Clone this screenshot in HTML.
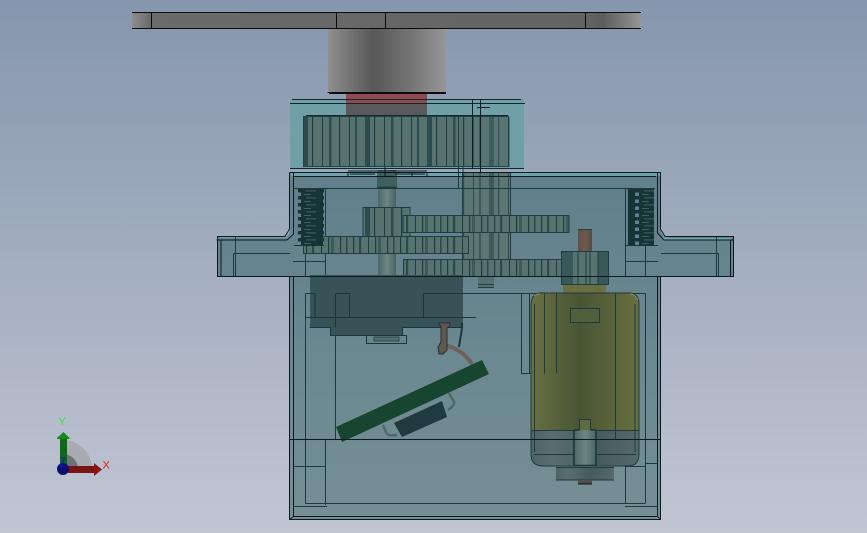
<!DOCTYPE html>
<html><head><meta charset="utf-8"><style>
html,body{margin:0;padding:0;width:867px;height:533px;overflow:hidden;background:#a5afc0}
svg{display:block}
text{font-family:"Liberation Sans",sans-serif}
</style></head><body>
<svg width="867" height="533" viewBox="0 0 867 533" xmlns="http://www.w3.org/2000/svg">
<defs>
<linearGradient id="bg" x1="0" y1="0" x2="0" y2="1"><stop offset="0" stop-color="#8596ad"/><stop offset="1" stop-color="#c2c6d3"/></linearGradient>
<linearGradient id="bar" x1="0" y1="0" x2="1" y2="0"><stop offset="0" stop-color="#8e8e8e"/><stop offset=".035" stop-color="#6b6b6b"/><stop offset=".9" stop-color="#636363"/><stop offset=".925" stop-color="#5c5c5c"/><stop offset="1" stop-color="#969696"/></linearGradient>
<linearGradient id="cyl" x1="0" y1="0" x2="1" y2="0"><stop offset="0" stop-color="#8f8f8f"/><stop offset=".38" stop-color="#585858"/><stop offset=".7" stop-color="#747474"/><stop offset="1" stop-color="#969696"/></linearGradient>
<linearGradient id="house" x1="0" y1="0" x2="0" y2="1"><stop offset="0" stop-color="#617f8b"/><stop offset="1" stop-color="#758f95"/></linearGradient>
<linearGradient id="motor" x1="0" y1="0" x2="1" y2="0"><stop offset="0" stop-color="#6a7044"/><stop offset=".45" stop-color="#485534"/><stop offset="1" stop-color="#68703f"/></linearGradient>
<linearGradient id="mlow" x1="0" y1="0" x2="1" y2="0"><stop offset="0" stop-color="#4d6366"/><stop offset=".2" stop-color="#5a6e70"/><stop offset=".6" stop-color="#445a5c"/><stop offset="1" stop-color="#56696b"/></linearGradient>
<linearGradient id="shaft" x1="0" y1="0" x2="1" y2="0"><stop offset="0" stop-color="#4b6868"/><stop offset=".5" stop-color="#6d8583"/><stop offset="1" stop-color="#47635f"/></linearGradient>
<linearGradient id="brown" x1="0" y1="0" x2="1" y2="0"><stop offset="0" stop-color="#5e5047"/><stop offset=".5" stop-color="#71584f"/><stop offset="1" stop-color="#4e4f49"/></linearGradient>
<pattern id="g1" width="62" height="60" patternUnits="userSpaceOnUse" x="303" y="116">
<rect width="62" height="60" fill="#587270"/>
<rect x="0" width="5" height="60" fill="#2c4c4d"/><rect x="9" width="1.2" height="60" fill="#1d3d40"/><rect x="19" width="1" height="60" fill="#1d3d40"/><rect x="26" width="2.500" height="60" fill="#2c4c4d"/><rect x="36" width="1.200" height="60" fill="#1d3d40"/><rect x="46" width="1" height="60" fill="#1d3d40"/><rect x="52" width="2" height="60" fill="#2c4c4d"/>
</pattern>
<pattern id="g2" width="47" height="40" patternUnits="userSpaceOnUse" x="303" y="236">
<rect width="47" height="40" fill="#587270"/>
<rect x="3" width="1.2" height="40" fill="#1d3d40"/><rect x="9" width="2.200" height="40" fill="#2a4a4b"/><rect x="18" width="1" height="40" fill="#1d3d40"/><rect x="25" width="1.200" height="40" fill="#1d3d40"/><rect x="28" width="3" height="40" fill="#3c5a5a"/><rect x="37" width="1.200" height="40" fill="#1d3d40"/><rect x="43" width="1.500" height="40" fill="#2a4a4b"/>
</pattern>
<pattern id="spr" width="26" height="7" patternUnits="userSpaceOnUse" x="298" y="189">
<rect x="0" y="0" width="26" height="3.500" fill="#173336"/><rect x="3" y="3.500" width="22" height="3.500" fill="#173336"/><rect x="8" y="1.500" width="10" height=".8" fill="#4d6b70"/><rect x="6" y="5" width="7" height=".8" fill="#4d6b70"/>
</pattern>
</defs>

<rect width="867" height="533" fill="url(#bg)"/>

<!-- top bar -->
<rect x="132" y="12.500" width="509" height="16" fill="url(#bar)"/>
<path d="M132 12.500H641M132 28.500H641M151.500 12.500V28.500M336.500 12.500V28.500M385.500 12.500V28.500M585.500 12.500V28.500" stroke="#0b0b0d" stroke-width="1" fill="none"/>

<!-- cylinder -->
<rect x="328" y="29" width="118" height="63" fill="url(#cyl)"/>
<path d="M327.500 92.500H446M329 93.500H446" stroke="#0c0c0c" stroke-width="1"/>

<!-- upper teal housing -->
<rect x="290" y="99" width="234" height="70" rx="2" fill="#6fa0a8"/>
<rect x="346" y="94" width="81" height="9" fill="#8e4a4e"/>
<rect x="346" y="103" width="81" height="13" fill="#5a5a5c"/>
<rect x="303" y="117" width="165" height="50" fill="url(#g1)"/>
<rect x="468" y="117" width="42" height="50" fill="url(#g1)"/>
<rect x="468" y="117" width="42" height="50" fill="#5c7a78" opacity=".35"/>
<rect x="303.500" y="116.500" width="205" height="50" fill="none" stroke="#214245" stroke-width="1"/>
<path d="M306 115.500H508M292 99.500H521M290 103.500H525M290 168.500H524" stroke="#12282d" stroke-width="1" fill="none"/>
<path d="M472.500 99.500V169M480.500 99.500V172M477 107.500H490" stroke="#0d1c20" stroke-width="1" fill="none"/>
<path d="M458.500 116V172M463 166V172" stroke="#1e3e42" stroke-width="1" fill="none"/>

<!-- housing -->
<path d="M290 172H661V229Q661 237 668 237H734V277H661V519H290V277H217V237H283Q290 237 290 229Z" fill="url(#house)"/>
<path d="M291 173H660V176H291Z" fill="#6fa3aa"/>
<path d="M220 238H288L292 233V237H220Z" fill="#6fa3aa"/>
<path d="M663 233L668 238H731V240H663Z" fill="#6fa3aa"/>

<!-- vertical gear tall -->
<rect x="462" y="172" width="49" height="87" fill="url(#g1)"/>
<rect x="462" y="172" width="49" height="87" fill="#66827f" opacity=".25"/>
<path d="M462.500 172V259M510.500 172V259" stroke="#1e3e42" fill="none"/>

<!-- center shaft -->
<rect x="378" y="170" width="18" height="105" fill="url(#shaft)"/>
<rect x="377" y="172" width="20" height="16" fill="#3f5e5e"/>
<path d="M377 187.500H397" stroke="#1d3d40" stroke-width="1.500"/>

<!-- thin frame lines -->
<path d="M294 188.500H655M458.500 172V188M325.500 188V277M625.500 188V277M305 293.500H315V317M305.500 293.500V503.500M335.500 293.500V439M335.500 293.500H349.500V317M423.500 317V293.500H645.500M306 317.500H476" stroke="#1a3a3e" stroke-width="1" fill="none"/>
<path d="M521.500 293.500V373.500H557M529.500 293.500V373.500M544.500 293.500V373.500M556.500 293.500V373.500M615.500 293.500V439M645.500 293.500V503.500M645 463.500H657M625.500 439V503.500M625 466.500H645M625 506.500H657M325.500 439V505M293 466.500H325.500M293 506.500H327M305.500 503.500H645" stroke="#1a3a3e" stroke-width="1" fill="none"/>
<path d="M235.500 237V277M233.500 253.500H290M233.500 253.500V277M293 261.500H325M294 245.500H322M305.500 246V277" stroke="#1a3a3e" fill="none"/>
<path d="M716.500 237V277M718.500 253.500V277M661 253.500H719M626 245.500H658M626 261.500H658M645.500 245V277" stroke="#1a3a3e" fill="none"/>

<!-- gears -->
<rect x="363" y="207.500" width="47" height="29" fill="url(#g1)"/>
<rect x="363" y="207.500" width="47" height="29" fill="none" stroke="#1d3d40"/>
<rect x="403" y="215.500" width="166" height="17" fill="url(#g2)" stroke="#1d3d40"/>
<rect x="303.500" y="236.500" width="165" height="17" fill="url(#g2)" stroke="#1d3d40"/>
<rect x="403.500" y="259.500" width="165" height="17" fill="url(#g2)" stroke="#1d3d40"/>
<rect x="478" y="276" width="16" height="12" fill="#557070"/>
<path d="M478 284.500H494M478 287.500H494" stroke="#22403f"/>

<!-- springs -->
<rect x="298" y="189" width="26" height="57" fill="url(#spr)"/>
<rect x="628" y="189" width="26" height="57" fill="url(#spr)"/>

<!-- pot dark box -->
<path d="M310 275H463V327H403V336H330V327H310Z" fill="#375358"/>
<path d="M309.500 327.500H330.500V335.500H402.500V327.500H463" stroke="#1a3639" fill="none"/>
<rect x="366.500" y="335.500" width="40" height="8" fill="#6a858b" stroke="#1a3639"/>
<rect x="374" y="337" width="25" height="4" fill="#56706f" stroke="#1a3639" stroke-width=".7"/>
<path d="M305 293.500H315V317M335.500 293.500V327M335.500 293.500H349.500V317M423.500 317V293.500H463M310 317.500H463" stroke="#1a3639" fill="none"/>

<!-- connector + wire -->
<path d="M443 345C455 347 465 353 472 364" stroke="#6c6358" stroke-width="4" fill="none"/>
<path d="M439 323H450V326L447 328V350L443 354H439L438 347L441 342V326L439 325Z" fill="#63564f" stroke="#1f3134"/>
<path d="M462 323V328L459 347" stroke="#1f3639" stroke-width="2" fill="none"/>
<!-- clips -->
<path d="M383 425L387 434Q389 436 397 435M449 393L454 402Q455 405 448 410" stroke="#4f6868" stroke-width="2.500" fill="none"/>
<path d="M394 423L442 401L447 417L402 437Z" fill="#1f3b40"/>
<path d="M336 427L482 360L489 374L342 442Z" fill="#17452f"/>

<!-- motor -->
<rect x="578" y="229" width="14" height="23" fill="url(#brown)"/>
<path d="M578 229.500H592" stroke="#2a3a3a"/>
<path d="M563 284H606V293H563Z" fill="#6a6f3f"/>
<path d="M531 304Q532 293 540 293H630Q639 294 639 304V430H531Z" fill="url(#motor)"/>
<path d="M531 430H639V454Q639 466 628 466H543Q531 466 531 454Z" fill="url(#mlow)"/>
<path d="M531 304Q532 293 540 293H630Q639 294 639 304V454Q639 466 628 466H543Q531 466 531 454Z" fill="none" stroke="#1f3a3d"/>
<path d="M531 430.500H639M534.500 304V452M635 304V452M534 454.500H574M595 454.500H636M544.500 293.500V373.500M556.500 293.500V373.500M615.500 293.500V439" stroke="#1f3a3d" fill="none"/>
<path d="M534 296Q536 294 540 294M630 294Q635 294 638 300" stroke="#8a8f55" fill="none"/>
<rect x="570.500" y="308.500" width="29" height="14" fill="#50603c" stroke="#1f3a3d"/>
<rect x="574" y="430" width="23" height="36" fill="url(#shaft)"/>
<path d="M579.500 430V419.500H590.500V430" fill="#5e6b40" stroke="#1f3a3d"/>
<path d="M574 430H579.500M590.500 430H596M574 430V465.500H596V430" stroke="#1a3538" stroke-width="1.600" fill="none"/>
<rect x="556" y="468" width="58" height="12" fill="url(#mlow)"/>
<path d="M556 467.500H614M556 480H614" stroke="#1f3a3d"/>
<rect x="578" y="480" width="14" height="5" fill="#4f4f4b"/>
<path d="M578 483.500H592" stroke="#20302f"/>
<!-- pinion -->
<rect x="561.500" y="251.500" width="47" height="33" fill="#587270" stroke="#1d3d40"/>
<rect x="562" y="252" width="9" height="32" fill="#3a5859"/>
<rect x="598" y="252" width="10" height="32" fill="#3a5859"/>
<path d="M572 251V284M578 251V284M586 251V284M590 251V284M598 251V284" stroke="#1d3d40" fill="none"/>

<!-- thick outlines -->
<path d="M289.500 172.500V229L285 236.500H217.500V276.500H733.500V236.500H665L660.500 229V172.500H289.500" stroke="#0b1a1e" stroke-width="1" fill="none"/>
<path d="M293.500 172V234L287 240H221V276M216.500 240H221M656 176.500H293M657.500 172V233L664 240H730.500V276.500M733.500 240H730.500" stroke="#0b1a1e" stroke-width="1" fill="none"/>
<path d="M289.500 277V519.500H660.500V277M293.500 277V516.500H657.500V277M293.500 516.500L289.500 519.500M657.500 516.500L660.500 519.500M290 439.500H661" stroke="#0b1a1e" stroke-width="1" fill="none"/>
<path d="M348 172V176M427 172V176M412 172V176M348 171H427M385 167V177M350 174H375M395 174H425" stroke="#0b1a1e" fill="none"/>

<!-- triad -->
<path d="M63 469V440A29 29 0 0 1 92 469Z" fill="#a8acb2"/>
<path d="M63 469V454A15 15 0 0 1 78 469Z" fill="#6e7278"/>
<rect x="60" y="438" width="7" height="30" fill="#0d6a14"/>
<path d="M57 438L63.500 432L69.500 438V439H57Z" fill="#118a18"/>
<rect x="68" y="466" width="27" height="7" fill="#7a1414"/>
<path d="M94 463L102 469.500L94 476Z" fill="#8c1414"/>
<circle cx="63" cy="469" r="6" fill="#0e0e70"/>
<path d="M60 458H65L60 466H65" stroke="#1414e0" stroke-width="1" fill="none"/>
<text x="58.500" y="425" font-size="11" fill="#3ce03c">Y</text>
<text x="102.500" y="468.500" font-size="11" fill="#e81818">X</text>
</svg>
</body></html>
